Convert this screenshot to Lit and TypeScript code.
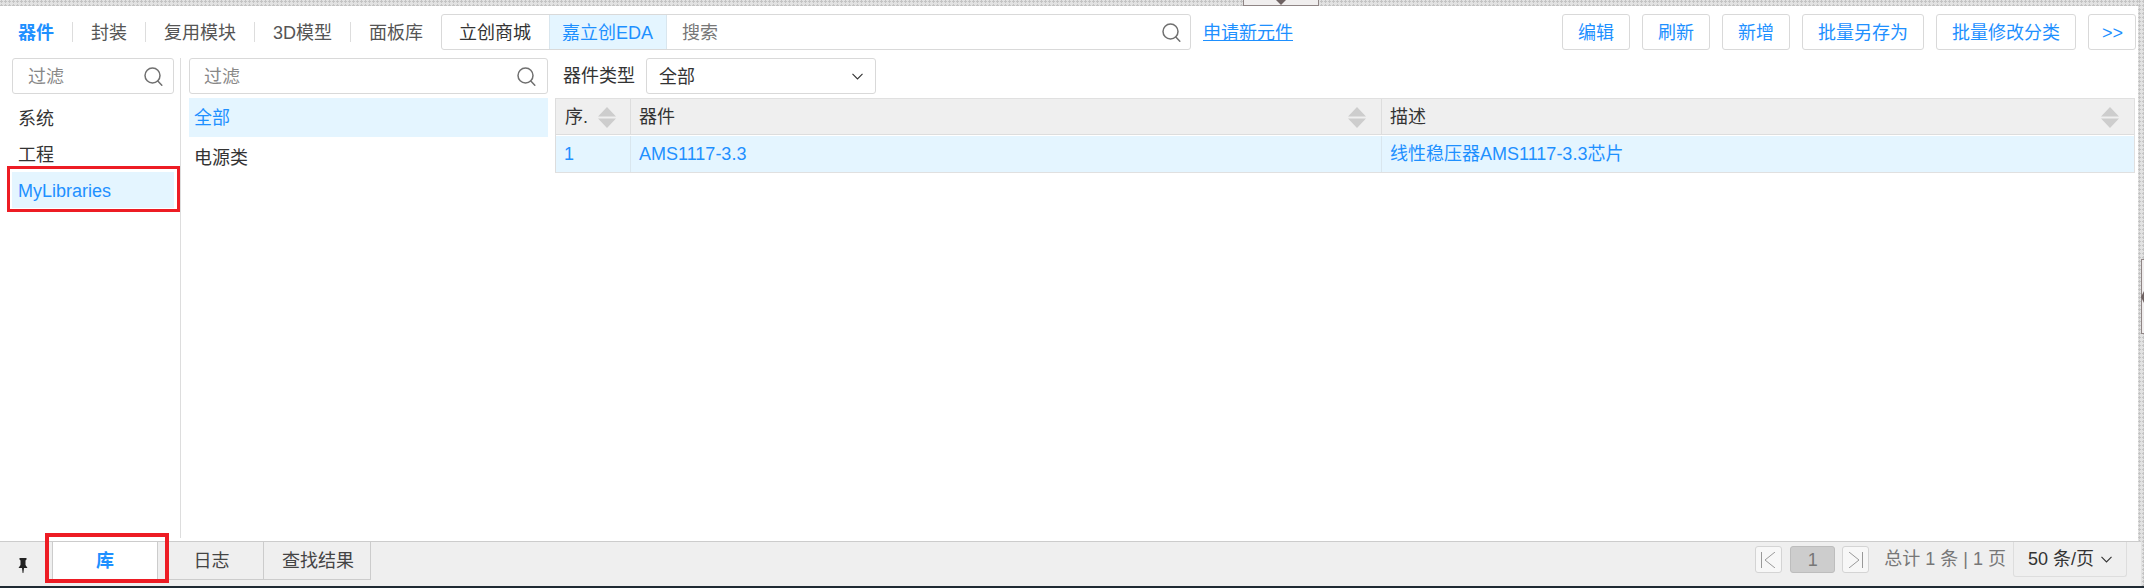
import { LitElement, html, css } from "lit";
import { customElement } from "lit/decorators.js";

const mag = html`<svg class="mag" width="19" height="19" viewBox="0 0 19 19" fill="none" stroke="#707070" stroke-width="1.5"><circle cx="8.5" cy="8.5" r="7.5"/><path d="M13.8 14 L17.8 18.2" stroke-linecap="round"/></svg>`;
const chev = html`<svg width="11" height="7" viewBox="0 0 11 7" fill="none" stroke="#333" stroke-width="1.1"><path d="M0.5 0.8 L5.5 6 L10.5 0.8"/></svg>`;
const sort = html`<svg class="sort" width="18" height="21" viewBox="0 0 18 21" fill="#cdcdcd"><path d="M9 0 L18 9.5 H0 Z M0 11.5 H18 L9 21 Z"/></svg>`;

@customElement("app-root")
export class AppRoot extends LitElement {
  static styles = css`
    :host { display: block; width: 2144px; height: 588px; overflow: hidden; position: relative; background: #fff;
      font-family: "Liberation Sans", "Noto Sans CJK SC", sans-serif; font-size: 18px; line-height: 24px; color: #333; }
    * { box-sizing: border-box; }
    .page { display: flex; flex-direction: column; height: 588px; padding-right: 3px; }
    .stripe { position: absolute; background-color: #e2e2e2; background-image: radial-gradient(circle at 1.5px 1.5px, #c4c4c4 1px, transparent 1.2px); background-size: 4px 4px; }
    .stripe.top { left: 0; top: 0; right: 0; height: 6px; }
    .stripe.right { right: 0; top: 0; bottom: 2px; width: 3px; }
    .handle-top { position: absolute; left: 1243px; top: 0; width: 76px; height: 6px; background: #f0eeee; border: 1px solid #8f8585; border-top: 0; display: flex; justify-content: center; }
    .handle-top i { width: 0; height: 0; border: 5px solid transparent; border-top-color: #6e6262; border-bottom: 0; }
    .handle-right { position: absolute; right: 0; top: 259px; width: 3px; height: 75px; background: #f0eeee; border-left: 1px solid #8f8585; border-top: 1px solid #8f8585; border-bottom: 1px solid #8f8585; display: flex; align-items: center; justify-content: flex-end; }
    .handle-right i { width: 0; height: 0; border: 6px solid transparent; border-right: 3px solid #6e6262; border-left: 0; }

    .toolbar { display: flex; align-items: center; height: 36px; margin-top: 14px; padding-left: 18px; padding-right: 5px; flex: none; }
    .tab { color: #555; white-space: nowrap; padding-top: 1px; }
    .tab.on { color: #1e90ff; font-weight: 700; }
    .sep { width: 1px; height: 20px; background: #ddd; margin: 0 18px; flex: none; }
    .sg { margin-left: 18px; width: 750px; height: 36px; border: 1px solid #d9d9d9; border-radius: 3px; display: flex; align-items: stretch; flex: none; }
    .sg .seg { display: flex; align-items: center; white-space: nowrap; }
    .seg span, .seg.a, .seg.b { padding-top: 1px; }
    .seg.a { width: 107px; padding-left: 17px; color: #333; }
    .seg.b { width: 118px; padding-left: 12px; color: #1e90ff; background: #e4f5ff; border-left: 1px solid #d9e6ee; border-right: 1px solid #d9e6ee; }
    .seg.c { flex: 1; padding-left: 15px; padding-right: 9px; color: #777; justify-content: space-between; }
    .link { margin-left: 12px; color: #1e90ff; text-decoration: underline; white-space: nowrap; padding-top: 1px; }
    .btns { margin-left: auto; display: flex; gap: 12px; }
    .btn { height: 36px; padding: 1px 15px 0; border: 1px solid #d9d9d9; border-radius: 3px; color: #1e90ff; display: flex; align-items: center; white-space: nowrap; background: #fff; }
    .btn.more { padding: 1px 13px 0; width: 48px; }

    .main { flex: 1; display: flex; min-height: 0; margin-top: 8px; margin-bottom: 3px; }
    .left { width: 181px; flex: none; border-right: 1px solid #ddd; padding-left: 12px; padding-right: 6px; }
    .filter { height: 36px; border: 1px solid #d9d9d9; border-radius: 3px; display: flex; align-items: center; justify-content: space-between; color: #888; background: #fff; }
    .filter span, .select span { padding-top: 2px; }
    .left .filter { padding: 0 10px 0 15px; }
    .mid .filter { padding: 0 11px 0 14px; }
    .item { height: 36px; padding: 7px 0 0 6px; white-space: nowrap; }
    .left .list { margin-top: 6px; }
    .item.sel { background: #e4f5ff; color: #1e90ff; position: relative; }
    .mark { position: absolute; border: 3px solid #ed1c24; pointer-events: none; }
    .mark.lib { left: -5px; right: -6px; top: -6px; bottom: -4px; }
    .mid { width: 359px; margin-left: 8px; flex: none; }
    .mid .list { margin-top: 4px; }
    .mid .item { height: 39px; padding: 8px 0 0 5px; }
    .mid .item + .item { height: 38px; padding-top: 9px; }
    .right { flex: 1; margin-left: 7px; min-width: 0; padding-right: 6px; }
    .filterrow { display: flex; align-items: center; height: 36px; padding-left: 8px; white-space: nowrap; margin-bottom: 4px; }
    .select { margin-left: 11px; width: 230px; height: 36px; border: 1px solid #d9d9d9; border-radius: 3px; display: flex; align-items: center; justify-content: space-between; padding: 0 12px; }
    .table { display: grid; grid-template-columns: 75px 751px 1fr; border: 1px solid #e0e0e0; border-left: 1px solid #ddd; }
    .cell { display: flex; align-items: center; justify-content: space-between; padding: 0 6px 0 8px; border-right: 1px solid #ddd; white-space: nowrap; }
    .cell:nth-child(3n) { border-right: 0; padding-right: 15px; }
    .head { height: 36px; background: #efefef; border-bottom: 1px solid #ddd; }
    .head .sort { margin-top: 1px; }
    .head:nth-child(1) { padding-left: 9px; padding-right: 14px; }
    .head:nth-child(2) { padding-right: 15px; }
    .row { height: 36px; margin-top: 1px; padding-bottom: 1px; background: #e4f5ff; color: #1e90ff; border-right-color: #d9e6ee; }

    .bar { flex: none; height: 45px; background: #efefef; border-top: 1px solid #ccc; display: flex; align-items: flex-start; position: relative; }
    .pin { margin: 16px 0 0 18px; width: 10px; flex: none; }
    .tabs { margin-left: 24px; display: flex; }
    .btab { height: 38px; width: 106px; padding-left: 2px; border-right: 1px solid #ccc; border-bottom: 1px solid #ccc; display: flex; align-items: center; justify-content: center; color: #444; }
    .btab:last-child { width: 107px; }
    .btab.on { padding-left: 0; background: #fff; color: #1e90ff; font-weight: 700; border-left: 1px solid #ccc; position: relative; }
    .mark.tabm { left: -8px; right: -12px; top: -9px; bottom: -4px; border-width: 4px; }
    .pager { margin-left: auto; display: flex; align-items: flex-start; margin-right: 14px; }
    .pg { margin-top: 4px; width: 27px; height: 27px; border: 1px solid #d4d4d4; border-radius: 3px; background: #f7f7f7; display: flex; align-items: center; justify-content: center; }
    .cur { margin: 4px 7px 0 8px; width: 45px; height: 27px; border: 1px solid #bdbdbd; border-radius: 3px; background: #cdcdcd; color: #777; display: flex; align-items: center; justify-content: center; }
    .total { margin: 5px 7px 0 15px; color: #777; white-space: nowrap; }
    .size { width: 114px; height: 35px; border: 1px solid #ddd; border-top: 0; border-radius: 0 0 3px 3px; display: flex; align-items: center; gap: 7px; padding-left: 14px; white-space: nowrap; }
    .dark { flex: none; height: 2px; background: #1f2a33; margin-right: -3px; }
  `;

  render() {
    return html`
      <div class="stripe top"></div>
      <div class="stripe right"></div>
      <div class="handle-top"><i></i></div>
      <div class="handle-right"><i></i></div>
      <div class="page">
        <div class="toolbar">
          <span class="tab on">器件</span><span class="sep"></span>
          <span class="tab">封装</span><span class="sep"></span>
          <span class="tab">复用模块</span><span class="sep"></span>
          <span class="tab">3D模型</span><span class="sep"></span>
          <span class="tab">面板库</span>
          <div class="sg">
            <div class="seg a">立创商城</div>
            <div class="seg b">嘉立创EDA</div>
            <div class="seg c"><span>搜索</span>${mag}</div>
          </div>
          <span class="link">申请新元件</span>
          <div class="btns">
            <div class="btn">编辑</div><div class="btn">刷新</div><div class="btn">新增</div>
            <div class="btn">批量另存为</div><div class="btn">批量修改分类</div><div class="btn more">&gt;&gt;</div>
          </div>
        </div>
        <div class="main">
          <div class="left">
            <div class="filter"><span>过滤</span>${mag}</div>
            <div class="list">
              <div class="item">系统</div>
              <div class="item">工程</div>
              <div class="item sel">MyLibraries<span class="mark lib"></span></div>
            </div>
          </div>
          <div class="mid">
            <div class="filter"><span>过滤</span>${mag}</div>
            <div class="list">
              <div class="item sel">全部</div>
              <div class="item">电源类</div>
            </div>
          </div>
          <div class="right">
            <div class="filterrow">器件类型<div class="select"><span>全部</span>${chev}</div></div>
            <div class="table">
              <div class="cell head">序.${sort}</div>
              <div class="cell head">器件${sort}</div>
              <div class="cell head">描述${sort}</div>
              <div class="cell row">1</div>
              <div class="cell row">AMS1117-3.3</div>
              <div class="cell row">线性稳压器AMS1117-3.3芯片</div>
            </div>
          </div>
        </div>
        <div class="bar">
          <svg class="pin" width="10" height="15" viewBox="0 0 10 15" fill="#222"><path d="M1.5 0 H8.5 V1.5 L7.5 2.5 V7 L9.5 10 H6 L5.4 15 H4.6 L4 10 H0.5 L2.5 7 V2.5 L1.5 1.5 Z"/></svg>
          <div class="tabs">
            <div class="btab on">库<span class="mark tabm"></span></div>
            <div class="btab">日志</div>
            <div class="btab">查找结果</div>
          </div>
          <div class="pager">
            <div class="pg"><svg width="17" height="16" viewBox="0 0 17 16" fill="none" stroke="#999" stroke-width="1"><path d="M1.5 0 V16 M15 0 L5 8 L15 16"/></svg></div>
            <div class="cur">1</div>
            <div class="pg"><svg width="17" height="16" viewBox="0 0 17 16" fill="none" stroke="#999" stroke-width="1"><path d="M15.5 0 V16 M2 0 L12 8 L2 16"/></svg></div>
            <div class="total">总计 1 条 | 1 页</div>
            <div class="size">50 条/页 ${chev}</div>
          </div>
        </div>
        <div class="dark"></div>
      </div>
    `;
  }
}
